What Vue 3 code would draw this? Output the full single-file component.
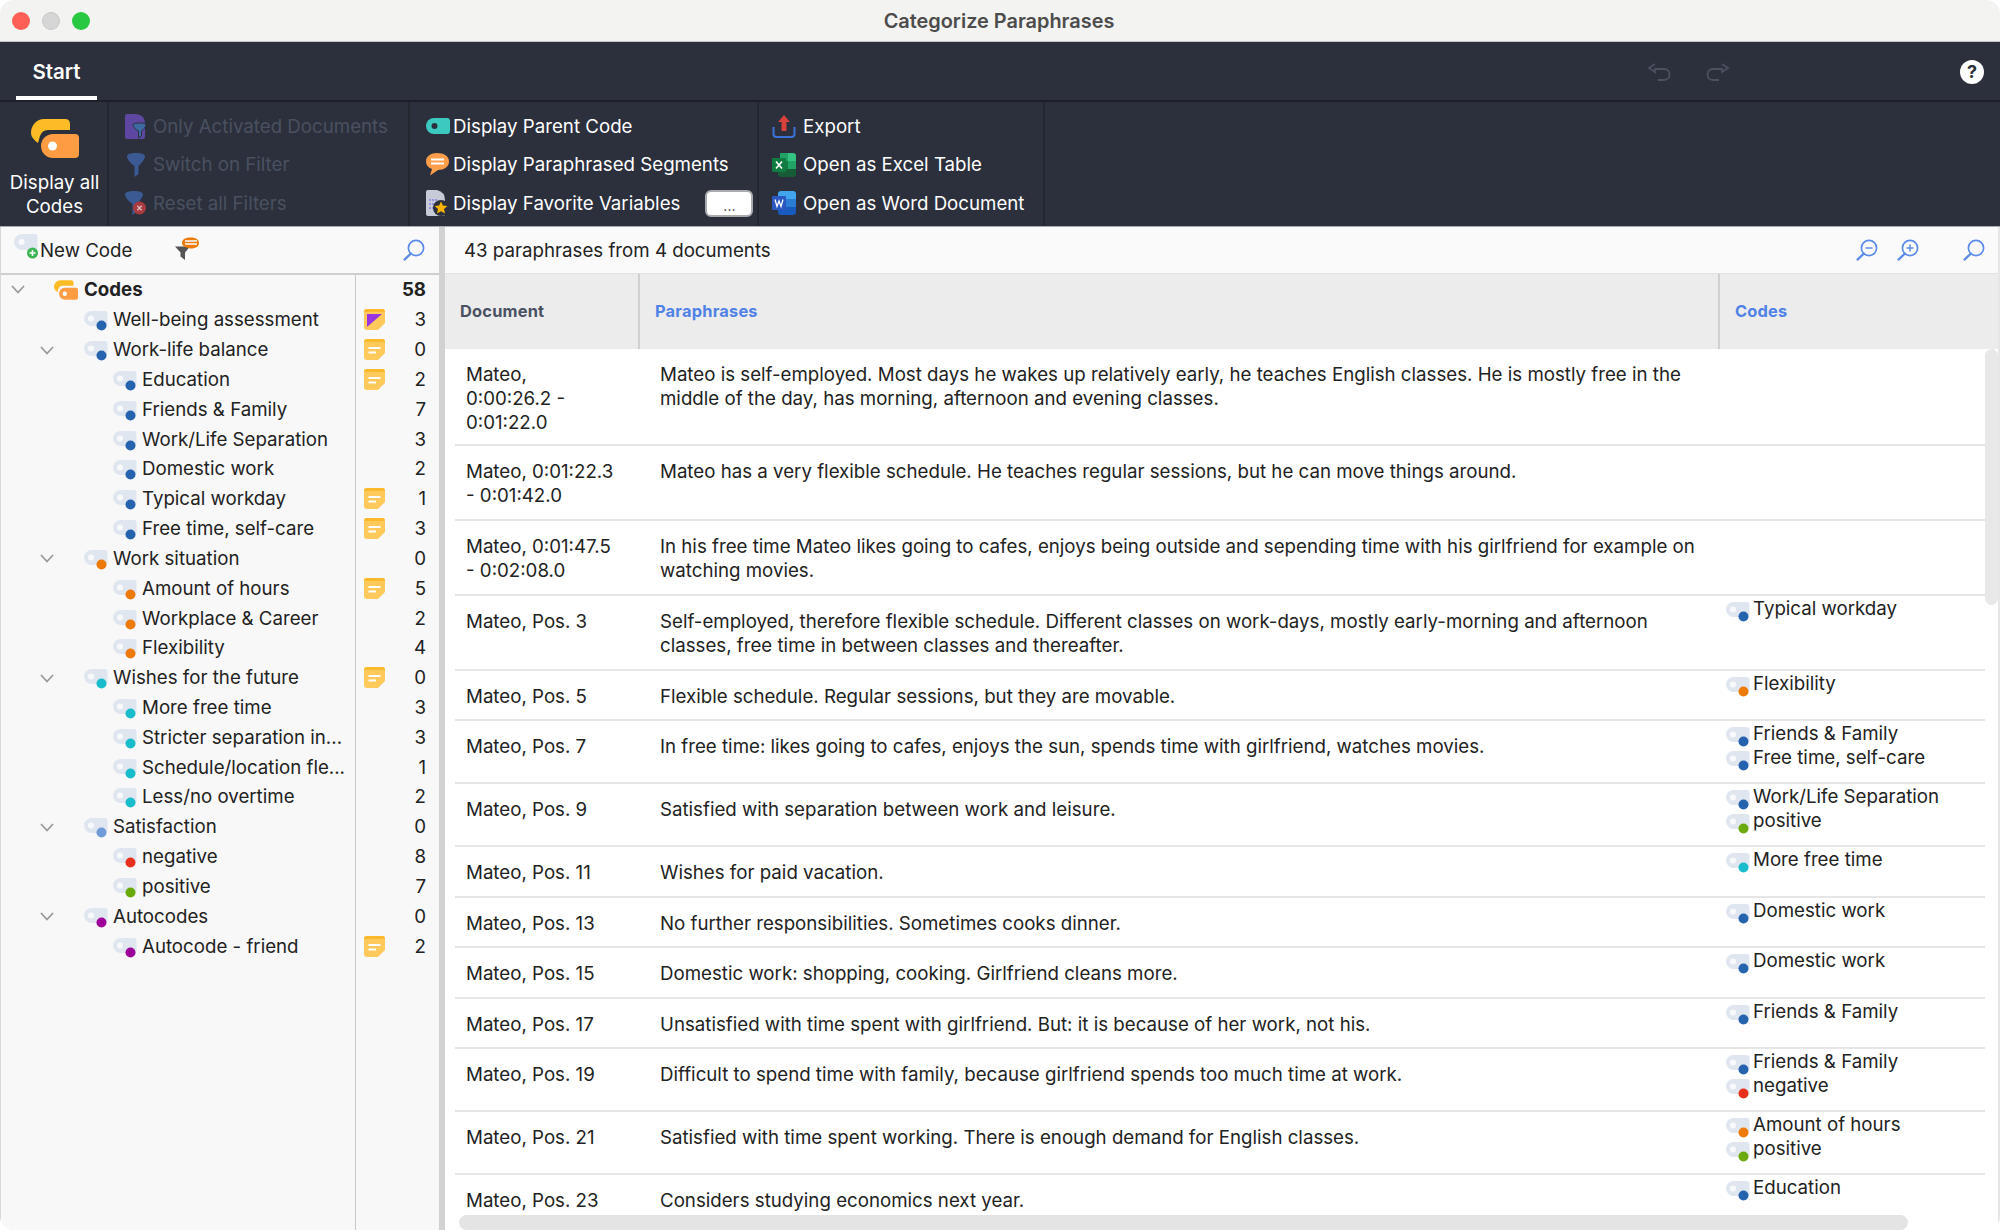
<script setup>
const blue = '#2563ae';
const orange = '#ee7a0a';
const teal = '#18bccb';
const sky = '#6f9bd8';
const red = '#e8301c';
const green = '#6aaa0a';
const purple = '#9c0099';

const tree = [
	{ name: 'Well-being assessment', lvl: 1, color: blue, memo: 'flag', count: 3 },
	{ name: 'Work-life balance', lvl: 1, open: true, color: blue, memo: 'note', count: 0 },
	{ name: 'Education', lvl: 2, color: blue, memo: 'note', count: 2 },
	{ name: 'Friends & Family', lvl: 2, color: blue, count: 7 },
	{ name: 'Work/Life Separation', lvl: 2, color: blue, count: 3 },
	{ name: 'Domestic work', lvl: 2, color: blue, count: 2 },
	{ name: 'Typical workday', lvl: 2, color: blue, memo: 'note', count: 1 },
	{ name: 'Free time, self-care', lvl: 2, color: blue, memo: 'note', count: 3 },
	{ name: 'Work situation', lvl: 1, open: true, color: orange, count: 0 },
	{ name: 'Amount of hours', lvl: 2, color: orange, memo: 'note', count: 5 },
	{ name: 'Workplace & Career', lvl: 2, color: orange, count: 2 },
	{ name: 'Flexibility', lvl: 2, color: orange, count: 4 },
	{ name: 'Wishes for the future', lvl: 1, open: true, color: teal, memo: 'note', count: 0 },
	{ name: 'More free time', lvl: 2, color: teal, count: 3 },
	{ name: 'Stricter separation in...', lvl: 2, color: teal, count: 3 },
	{ name: 'Schedule/location fle...', lvl: 2, color: teal, count: 1 },
	{ name: 'Less/no overtime', lvl: 2, color: teal, count: 2 },
	{ name: 'Satisfaction', lvl: 1, open: true, color: sky, count: 0 },
	{ name: 'negative', lvl: 2, color: red, count: 8 },
	{ name: 'positive', lvl: 2, color: green, count: 7 },
	{ name: 'Autocodes', lvl: 1, open: true, color: purple, count: 0 },
	{ name: 'Autocode - friend', lvl: 2, color: purple, memo: 'note', count: 2 },
];

const rows = [
	{ h: 97, doc: 'Mateo,\n0:00:26.2 -\n0:01:22.0', text: 'Mateo is self-employed. Most days he wakes up relatively early, he teaches English classes. He is mostly free in the\nmiddle of the day, has morning, afternoon and evening classes.', codes: [] },
	{ h: 75, doc: 'Mateo, 0:01:22.3\n- 0:01:42.0', text: 'Mateo has a very flexible schedule. He teaches regular sessions, but he can move things around.', codes: [] },
	{ h: 75, doc: 'Mateo, 0:01:47.5\n- 0:02:08.0', text: 'In his free time Mateo likes going to cafes, enjoys being outside and sepending time with his girlfriend for example on\nwatching movies.', codes: [] },
	{ h: 75, doc: 'Mateo, Pos. 3', text: 'Self-employed, therefore flexible schedule. Different classes on work-days, mostly early-morning and afternoon\nclasses, free time in between classes and thereafter.', codes: [['Typical workday', blue]] },
	{ h: 50, doc: 'Mateo, Pos. 5', text: 'Flexible schedule. Regular sessions, but they are movable.', codes: [['Flexibility', orange]] },
	{ h: 63, doc: 'Mateo, Pos. 7', text: 'In free time: likes going to cafes, enjoys the sun, spends time with girlfriend, watches movies.', codes: [['Friends & Family', blue], ['Free time, self-care', blue]] },
	{ h: 63, doc: 'Mateo, Pos. 9', text: 'Satisfied with separation between work and leisure.', codes: [['Work/Life Separation', blue], ['positive', green]] },
	{ h: 51, doc: 'Mateo, Pos. 11', text: 'Wishes for paid vacation.', codes: [['More free time', teal]] },
	{ h: 50, doc: 'Mateo, Pos. 13', text: 'No further responsibilities. Sometimes cooks dinner.', codes: [['Domestic work', blue]] },
	{ h: 51, doc: 'Mateo, Pos. 15', text: 'Domestic work: shopping, cooking. Girlfriend cleans more.', codes: [['Domestic work', blue]] },
	{ h: 50, doc: 'Mateo, Pos. 17', text: 'Unsatisfied with time spent with girlfriend. But: it is because of her work, not his.', codes: [['Friends & Family', blue]] },
	{ h: 63, doc: 'Mateo, Pos. 19', text: 'Difficult to spend time with family, because girlfriend spends too much time at work.', codes: [['Friends & Family', blue], ['negative', red]] },
	{ h: 63, doc: 'Mateo, Pos. 21', text: 'Satisfied with time spent working. There is enough demand for English classes.', codes: [['Amount of hours', orange], ['positive', green]] },
	{ h: 60, doc: 'Mateo, Pos. 23', text: 'Considers studying economics next year.', codes: [['Education', blue]] },
];
</script>

<template>
	<div class="window">
		<svg class="defs" width="0" height="0">
			<defs>
				<symbol id="code-tag" viewBox="0 0 24 21">
					<path d="M7.5 0H21Q23.5 0 23.5 2.5V12.5Q23.5 15 21 15H7.5A7.5 7.5 0 0 1 7.5 0Z" fill="#e0e6f0" />
					<circle cx="7" cy="7.5" r="3" fill="#f8f9fb" />
					<circle cx="17.5" cy="14.5" r="5" fill="currentColor" />
				</symbol>
				<symbol id="codes-big" viewBox="0 0 48 39">
					<path d="M0 14C0 6 6 0 13 0H34Q39 0 39 5V11H17Q11 11 9 17L7 24Q0 19 0 14Z" fill="#fdbb25" />
					<path d="M22 15H44Q48 15 48 19V35Q48 39 44 39H22A12 12 0 0 1 22 15Z" fill="#fe9c43" />
					<circle cx="21.5" cy="27" r="4.5" fill="currentColor" />
				</symbol>
				<symbol id="search" viewBox="0 0 22 22">
					<circle cx="13" cy="9" r="7.6" fill="none" stroke="#5b8ce8" stroke-width="1.7" />
					<path d="M7.8 14.6L1.5 20.6" stroke="#5b8ce8" stroke-width="2.2" stroke-linecap="round" />
				</symbol>
				<symbol id="note" viewBox="0 0 21 21">
					<path d="M3 0H18Q21 0 21 3V14L14 21H3Q0 21 0 18V3Q0 0 3 0Z" fill="#ffc95c" />
					<path d="M3 0H18Q21 0 21 3H0Q0 0 3 0Z" fill="#fdb92c" />
					<path d="M4.5 9H16.5M4.5 13.5H12" stroke="#fff" stroke-width="1.8" />
				</symbol>
				<symbol id="flag" viewBox="0 0 21 21">
					<path d="M3 0H18Q21 0 21 3V14L14 21H3Q0 21 0 18V3Q0 0 3 0Z" fill="#ffc95c" />
					<path d="M3 0H18Q21 0 21 3H0Q0 0 3 0Z" fill="#fdb92c" />
					<path d="M3 5H18L3 18Z" fill="#9a33e0" />
				</symbol>
				<symbol id="chevron" viewBox="0 0 14 9">
					<path d="M1 1L7 7.5L13 1" fill="none" stroke="#9a9a9a" stroke-width="1.8" />
				</symbol>
				<symbol id="funnel" viewBox="0 0 18 24">
					<path d="M0 3.5C0 1 4 0 9 0S18 1 18 3.5C18 6 14 11 11.5 13V21L7.5 24V13C4 11 0 6 0 3.5Z" fill="#3b5a94" />
				</symbol>
			</defs>
		</svg>

		<header class="titlebar">
			<div class="lights">
				<span class="light red"></span>
				<span class="light grey"></span>
				<span class="light green"></span>
			</div>
			<div class="title">Categorize Paraphrases</div>
		</header>

		<section class="dark">
			<div class="tabs">
				<div class="tab">Start</div>
				<div class="tab-tools">
					<svg class="undo" width="24" height="18" viewBox="0 0 24 18">
						<path d="M8 1L2 5L8 9V6H17C21 6 22.5 9 22.5 11.5S21 17 17 17H11" fill="none" stroke="#4b515f" stroke-width="1.8" />
					</svg>
					<svg class="redo" width="24" height="18" viewBox="0 0 24 18">
						<path d="M16 1L22 5L16 9V6H7C3 6 1.5 9 1.5 11.5S3 17 7 17H13" fill="none" stroke="#4b515f" stroke-width="1.8" />
					</svg>
					<div class="help">?</div>
				</div>
			</div>

			<div class="ribbon">
				<div class="group g-big">
					<svg class="big-ic" width="48" height="39"><use href="#codes-big" /></svg>
					<div class="big-label">Display all<br />Codes</div>
				</div>

				<div class="group g-filter">
					<div class="item off">
						<svg class="r-ic" width="22" height="25" viewBox="0 0 22 25">
							<path d="M0 2Q0 0 2 0H11Q20 1 20 9V23Q20 25 18 25H2Q0 25 0 23Z" fill="#5e47a0" />
							<path d="M8 11C8 9.5 11 9 14.5 9S21 9.5 21 11C21 13 18 16 16.5 17V22L13.5 24V17C11 16 8 13 8 11Z" fill="#3d6aa3" stroke="#2b303c" stroke-width="1" />
						</svg>
						<span>Only Activated Documents</span>
					</div>
					<div class="item off">
						<svg class="r-ic" width="19" height="24"><use href="#funnel" /></svg>
						<span>Switch on Filter</span>
					</div>
					<div class="item off">
						<svg class="r-ic" width="22" height="25" viewBox="0 0 22 25">
							<path d="M0 3.5C0 1 4 0 9 0S18 1 18 3.5C18 6 14 11 11.5 13V21L7.5 24V13C4 11 0 6 0 3.5Z" fill="#3b5a94" />
							<circle cx="14.5" cy="17" r="6.5" fill="#a83a40" />
							<path d="M12.3 14.8L16.7 19.2M16.7 14.8L12.3 19.2" stroke="#d9b8ba" stroke-width="1.5" />
						</svg>
						<span>Reset all Filters</span>
					</div>
				</div>

				<div class="group g-display">
					<div class="item">
						<svg class="d-ic" width="24" height="16" viewBox="0 0 24 16">
							<path d="M8 0H21Q24 0 24 3V13Q24 16 21 16H8A8 8 0 0 1 8 0Z" fill="#3cc9c0" />
							<circle cx="8.5" cy="8" r="3" fill="#2b303c" />
						</svg>
						<span>Display Parent Code</span>
					</div>
					<div class="item">
						<svg class="d-ic" width="24" height="23" viewBox="0 0 24 23">
							<path d="M11 0C18 0 23 3 23 8.5S18 17 12 17L4 22.5L6 16C2 14.5 0 12 0 8.5C0 3 5 0 11 0Z" fill="#fe9d4a" />
							<path d="M5 6.5H18M5 10.5H18" stroke="#fff" stroke-width="2" />
						</svg>
						<span>Display Paraphrased Segments</span>
					</div>
					<div class="item">
						<svg class="d-ic" width="24" height="26" viewBox="0 0 24 26">
							<path d="M2 0H11Q19 2 19 10V24Q19 26 17 26H2Q0 26 0 24V2Q0 0 2 0Z" fill="#c6cbd8" />
							<path d="M3 10H12M3 14H10M3 18H8" stroke="#8d7fe0" stroke-width="1.5" stroke-dasharray="2 1" />
							<circle cx="15" cy="18" r="8" fill="#2b303c" />
							<path d="M15 11.5L16.9 15.6L21.4 16.1L18 19.1L19 23.5L15 21.2L11 23.5L12 19.1L8.6 16.1L13.1 15.6Z" fill="#f8b400" />
						</svg>
						<span>Display Favorite Variables</span>
						<button class="more">...</button>
					</div>
				</div>

				<div class="group g-export">
					<div class="item">
						<svg class="e-ic" width="24" height="23" viewBox="0 0 24 23">
							<path d="M12 0L18 7H14.5V16H9.5V7H6Z" fill="#d9423a" />
							<path d="M1.5 12V19Q1.5 22 4.5 22H19.5Q22.5 22 22.5 19V12" fill="none" stroke="#3a72d8" stroke-width="2" />
						</svg>
						<span>Export</span>
					</div>
					<div class="item">
						<svg class="e-ic" width="24" height="24" viewBox="0 0 24 24">
							<path d="M8 0H16V8H8Z" fill="#21a366" />
							<path d="M16 0H21Q24 0 24 3V8H16Z" fill="#33c481" />
							<path d="M8 8H16V16H8Z" fill="#107c41" />
							<path d="M16 8H24V16H16Z" fill="#21a366" />
							<path d="M6 16H24V21Q24 24 21 24H9Q6 24 6 21Z" fill="#185c37" />
							<path d="M1 5H13Q14 5 14 6V18Q14 19 13 19H1Q0 19 0 18V6Q0 5 1 5Z" fill="#107c41" />
							<path d="M4 8.5L10 15.5M10 8.5L4 15.5" stroke="#fff" stroke-width="1.6" />
						</svg>
						<span>Open as Excel Table</span>
					</div>
					<div class="item">
						<svg class="e-ic" width="24" height="24" viewBox="0 0 24 24">
							<path d="M9 0H21Q24 0 24 3V8H6V3Q6 0 9 0Z" fill="#41a5ee" />
							<path d="M6 8H24V16H6Z" fill="#2b7cd3" />
							<path d="M6 16H24V21Q24 24 21 24H9Q6 24 6 21Z" fill="#185abd" />
							<path d="M1 5H13Q14 5 14 6V18Q14 19 13 19H1Q0 19 0 18V6Q0 5 1 5Z" fill="#2a58c0" />
							<path d="M3 8.5L5 15.5L7 10L9 15.5L11 8.5" fill="none" stroke="#fff" stroke-width="1.3" />
						</svg>
						<span>Open as Word Document</span>
					</div>
				</div>
			</div>
		</section>

		<main class="body">
			<aside class="side">
				<div class="toolbar side-bar">
					<svg class="new-ic" width="26" height="26" viewBox="0 0 26 26">
						<path d="M8 0H21Q23.5 0 23.5 2.5V13Q23.5 16 21 16H8A8 8 0 0 1 8 0Z" fill="#e0e6f0" />
						<circle cx="7.5" cy="8" r="3" fill="#f8f9fb" />
						<circle cx="18.5" cy="19" r="5.5" fill="#3cb552" />
						<path d="M15.5 19H21.5M18.5 16V22" stroke="#fff" stroke-width="1.6" />
					</svg>
					<span class="new-code">New Code</span>
					<svg class="filter-ic" width="24" height="24" viewBox="0 0 24 24">
						<path d="M0 9.5H15L10 15.5V23L5.5 19.5V15.5Z" fill="#555" />
						<path d="M7 6C7 2 11 0.5 15.5 0.5S24 2 24 6S20 11.5 15.5 11.5L12 10.5C9 10 7 8.5 7 6Z" fill="#ee7a0a" />
						<path d="M10 4H22M10 7H22" stroke="#fff" stroke-width="1.4" />
					</svg>
					<svg class="search-ic" width="22" height="22"><use href="#search" /></svg>
				</div>

				<div class="tree">
					<div class="t-row root">
						<div class="t-main">
							<svg class="chev root-chev" width="14" height="9"><use href="#chevron" /></svg>
							<svg class="root-ic" width="24" height="20"><use href="#codes-big" /></svg>
							<span>Codes</span>
						</div>
						<div class="t-side"><span class="count">58</span></div>
					</div>

					<div v-for="n in tree" :key="n.name" class="t-row">
						<div class="t-main" :class="n.lvl === 1 ? 'lvl1' : 'lvl2'">
							<svg v-if="n.open" class="chev" width="14" height="9"><use href="#chevron" /></svg>
							<svg class="tag" width="24" height="21" :style="{ color: n.color }"><use href="#code-tag" /></svg>
							<span>{{ n.name }}</span>
						</div>
						<div class="t-side">
							<svg v-if="n.memo" class="memo" width="21" height="21"><use :href="'#' + n.memo" /></svg>
							<span class="count">{{ n.count }}</span>
						</div>
					</div>
					<div class="t-fill"></div>
				</div>
			</aside>

			<section class="content">
				<div class="toolbar main-bar">
					<span class="summary">43 paraphrases from 4 documents</span>
					<div class="main-tools">
						<svg width="22" height="22" viewBox="0 0 22 22">
							<use href="#search" />
							<path d="M9.5 9H16.5" stroke="#5b8ce8" stroke-width="1.5" />
						</svg>
						<svg width="22" height="22" viewBox="0 0 22 22">
							<use href="#search" />
							<path d="M9.5 9H16.5M13 5.5V12.5" stroke="#5b8ce8" stroke-width="1.5" />
						</svg>
						<svg class="last" width="22" height="22"><use href="#search" /></svg>
					</div>
				</div>

				<div class="thead">
					<div class="th doc-h">Document</div>
					<div class="th para-h">Paraphrases</div>
					<div class="th codes-h">Codes</div>
				</div>

				<div class="tbody">
					<div v-for="r in rows" :key="r.doc" class="tr" :style="{ height: r.h + 'px' }">
						<div class="td">{{ r.doc }}</div>
						<div class="td para">{{ r.text }}</div>
						<div class="codes">
							<div v-for="c in r.codes" :key="c[0]" class="code">
								<svg class="tag" width="24" height="21" :style="{ color: c[1] }"><use href="#code-tag" /></svg>
								<span>{{ c[0] }}</span>
							</div>
						</div>
					</div>
					<div class="v-scroll"></div>
					<div class="h-scroll"></div>
				</div>
			</section>
		</main>
	</div>
</template>

<style>
	html,
	body {
		margin: 0;
		background: #fff;
	}
</style>

<style scoped>
	* {
		box-sizing: border-box;
	}
	.defs {
		position: absolute;
	}
	.window {
		width: 2000px;
		height: 1230px;
		display: flex;
		flex-direction: column;
		overflow: hidden;
		border-radius: 14px;
		font-family: Inter, 'Liberation Sans', sans-serif;
		font-size: 18.7px;
		color: #222;
		background: #fff;
	}

	.titlebar {
		height: 42px;
		flex: none;
		display: flex;
		align-items: center;
		justify-content: center;
		position: relative;
		background: #f3f3f1;
		border-bottom: 1px solid #c4c4c4;
	}
	.lights {
		position: absolute;
		left: 12px;
		top: 12px;
		display: flex;
		gap: 12px;
	}
	.light {
		width: 18px;
		height: 18px;
		border-radius: 50%;
	}
	.red {
		background: #fe5f57;
	}
	.grey {
		background: #d6d6d6;
		border: 1px solid #c8c8c8;
	}
	.green {
		background: #28c840;
	}
	.title {
		margin-left: -2px;
		font-size: 19.9px;
		font-weight: 600;
		color: #4c4c4c;
	}

	.dark {
		height: 185px;
		flex: none;
		background: #2b303c;
		border-bottom: 1px solid #a9abaf;
		color: #fff;
	}
	.tabs {
		height: 60px;
		display: flex;
		padding-left: 16px;
		border-bottom: 2px solid #1d2028;
	}
	.tab {
		width: 81px;
		height: 58px;
		flex: none;
		line-height: 60px;
		text-align: center;
		font-weight: 600;
		font-size: 20.5px;
		border-bottom: 4px solid #fff;
	}
	.tab-tools {
		flex: 1;
		display: flex;
		align-items: center;
		padding: 1px 0 0 1550px;
	}
	.redo {
		margin-left: 35px;
	}
	.help {
		width: 24px;
		height: 24px;
		margin-left: 230px;
		border-radius: 50%;
		background: #fff;
		color: #2b303c;
		font-weight: 700;
		font-size: 18px;
		line-height: 24px;
		text-align: center;
	}

	.ribbon {
		height: 124px;
		display: flex;
	}
	.group {
		padding-top: 5px;
		border-right: 2px solid #23272f;
		display: flex;
		flex-direction: column;
	}
	.g-big {
		width: 109px;
		align-items: center;
		padding: 17px 0 0 2px;
	}
	.big-label {
		margin-top: 13px;
		line-height: 24px;
		text-align: center;
		font-size: 18.7px;
	}
	.g-filter {
		width: 301px;
		padding-left: 16px;
	}
	.g-display {
		width: 349px;
		padding-left: 16px;
	}
	.g-export {
		width: 286px;
		padding-left: 13px;
	}
	.item {
		height: 38.5px;
		display: flex;
		align-items: center;
		white-space: nowrap;
	}
	.off {
		color: #4a5060;
	}
	.r-ic {
		width: 22px;
		margin-right: 6px;
		flex: none;
	}
	.d-ic {
		width: 24px;
		margin-right: 3px;
		flex: none;
	}
	.e-ic {
		margin-right: 7px;
		flex: none;
	}
	.more {
		width: 48px;
		height: 27px;
		margin-left: 25px;
		padding: 6px 0 0;
		border: 2px solid #a9abaf;
		border-radius: 6px;
		background: #fff;
		color: #444;
		font: 14px Inter, sans-serif;
		line-height: 14px;
	}

	.body {
		flex: 1;
		display: flex;
		min-height: 0;
	}
	.side {
		width: 445px;
		flex: none;
		display: flex;
		flex-direction: column;
		background: #f8f8f8;
		border-right: 6px solid #d2d2d2;
		border-left: 1px solid #d8d8d8;
	}
	.toolbar {
		height: 46px;
		flex: none;
		display: flex;
		align-items: center;
		background: #f9f9f9;
	}
	.side-bar {
		padding-left: 13px;
		position: relative;
	}
	.new-ic {
		margin-top: -6px;
		flex: none;
	}
	.filter-ic {
		margin-left: 43px;
		margin-top: -2px;
	}
	.search-ic {
		margin-left: auto;
		margin-right: 14px;
	}

	.tree {
		flex: 1;
		display: flex;
		flex-direction: column;
		border-top: 2px solid #cfcfcf;
	}
	.t-row {
		height: 29.84px;
		flex: none;
		display: flex;
		align-items: center;
	}
	.t-main {
		width: 354px;
		height: 100%;
		display: flex;
		align-items: center;
		white-space: nowrap;
	}
	.lvl1 {
		padding-left: 83px;
		position: relative;
	}
	.lvl2 {
		padding-left: 112px;
	}
	.lvl1 .chev {
		position: absolute;
		left: 39px;
		top: 11px;
	}
	.root {
		font-weight: 700;
	}
	.root-chev {
		margin-left: 10px;
	}
	.root-ic {
		margin-left: 29px;
		margin-right: 6px;
		color: #fff;
	}
	.tag {
		flex: none;
		margin-top: 4px;
		margin-right: 5px;
	}
	.t-side {
		width: 84px;
		height: 100%;
		display: flex;
		align-items: center;
		padding: 0 13px 0 8px;
		border-left: 1px solid #c9c9c9;
	}
	.memo {
		flex: none;
	}
	.count {
		margin-left: auto;
	}
	.t-fill {
		flex: 1;
		margin-left: 354px;
		border-left: 1px solid #c9c9c9;
	}

	.content {
		flex: 1;
		min-width: 0;
		display: flex;
		flex-direction: column;
		background: #fff;
		border-right: 2px solid #e6e6e6;
	}
	.main-bar {
		padding: 0 13px 0 19px;
		background: #fafafa;
	}
	.main-tools {
		margin-left: auto;
		display: flex;
		gap: 19px;
	}
	.main-tools .last {
		margin-left: 25px;
	}

	.thead {
		height: 76px;
		flex: none;
		display: grid;
		grid-template-columns: 193px 1080px 1fr;
		background: #ececec;
		border-top: 1px solid #e3e3e3;
	}
	.th {
		padding-left: 15px;
		font-size: 16.4px;
		font-weight: 700;
		line-height: 75px;
		color: #5082e6;
		letter-spacing: 0.2px;
	}
	.doc-h {
		color: #4a5163;
	}
	.para-h,
	.codes-h {
		border-left: 2px solid #d0d0d0;
	}

	.tbody {
		flex: 1;
		min-height: 0;
		position: relative;
		overflow: hidden;
	}
	.tr {
		margin-left: 10px;
		margin-right: 13px;
		display: grid;
		grid-template-columns: 184px 1080px 1fr;
		border-bottom: 2px solid #e6e6e6;
	}
	.td {
		padding: 14px 0 0 11px;
		line-height: 24px;
		white-space: pre-line;
	}
	.para {
		padding-left: 21px;
	}
	.codes {
		padding: 1px 0 0 7px;
	}
	.code {
		height: 24px;
		display: flex;
		align-items: center;
		line-height: 24px;
		white-space: nowrap;
	}
	.code .tag {
		margin-top: 6px;
		margin-right: 3px;
	}
	.v-scroll {
		position: absolute;
		top: 0;
		right: 0;
		width: 13px;
		height: 256px;
		border-radius: 7px;
		background: #e8e8e8;
	}
	.h-scroll {
		position: absolute;
		left: 14px;
		bottom: 0;
		width: 1449px;
		height: 15px;
		border-radius: 8px;
		background: #e4e4e4;
	}
</style>
